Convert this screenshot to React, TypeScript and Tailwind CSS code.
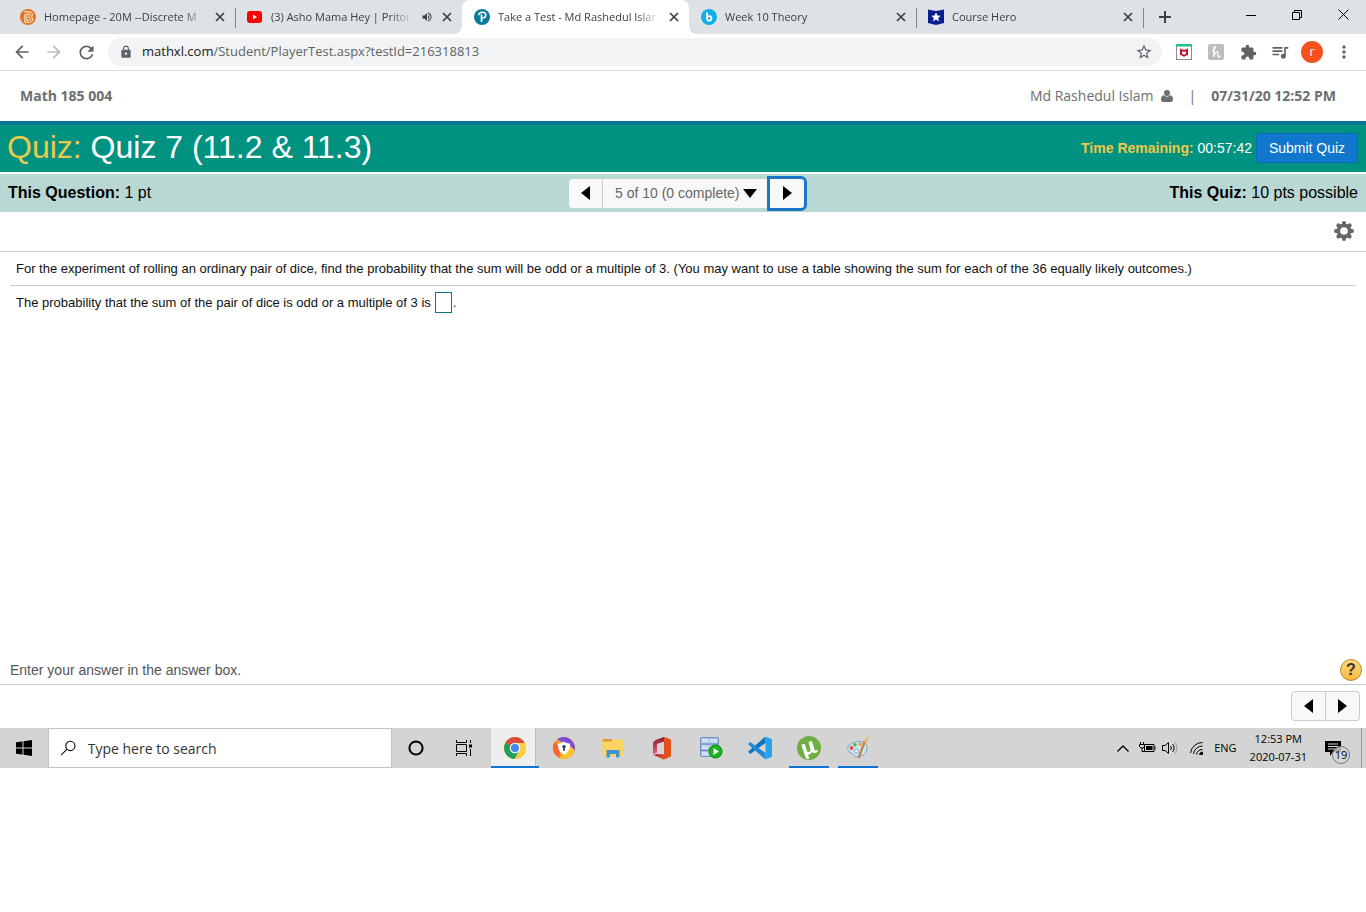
import { useState } from "react";
import type { ReactNode } from "react";
import {
  MdArrowBack,
  MdArrowForward,
  MdExtension,
  MdLock,
  MdMoreVert,
  MdQueueMusic,
  MdRefresh,
  MdStarBorder,
  MdVolumeUp,
} from "react-icons/md";

/* ---------- favicons ---------- */

const BrightspaceIcon = () => (
  <svg viewBox="0 0 16 16" className="w-4 h-4 shrink-0">
    <circle cx="8" cy="8" r="8" fill="#e5761d" />
    <path d="M3.8 2.8h5.7c3.3 0 3.6 3.8 1.9 5 2.4 1.2 1.7 5.5-1.9 5.5H4.8V5" fill="none" stroke="#fff" strokeWidth="0.9" />
    <path d="M6.7 11.4V4.8h2.5c1.7 0 1.7 2.2 0 2.2h-.9m0 1.6h1.2c1.9 0 1.9 2.8 0 2.8H6.7" fill="none" stroke="#fff" strokeWidth="0.8" />
  </svg>
);

const YoutubeIcon = () => (
  <svg viewBox="0 0 16 16" className="w-4 h-4 shrink-0">
    <rect x="0" y="2" width="15" height="12" rx="3" fill="#f00" />
    <path d="M6 5.6v4.8L10 8z" fill="#fff" />
  </svg>
);

const PearsonIcon = () => (
  <svg viewBox="0 0 16 16" className="w-4 h-4 shrink-0">
    <circle cx="8" cy="8" r="8" fill="#0b7b9c" />
    <path d="M4.4 6.2C5 4 7 3.2 8.6 3.3c2.4.1 3.4 1.5 3.2 3.1-.2 1.7-1.8 2.6-3.7 2.6" fill="none" stroke="#fff" strokeWidth="1.6" />
    <path d="M7.5 5.2V13" stroke="#fff" strokeWidth="1.7" />
  </svg>
);

const BongoIcon = () => (
  <svg viewBox="0 0 16 16" className="w-4 h-4 shrink-0">
    <circle cx="8" cy="8" r="8" fill="#10aeea" />
    <path d="M6 3.5v6.3" stroke="#fff" strokeWidth="1.9" />
    <circle cx="8.2" cy="9.4" r="2.2" fill="none" stroke="#fff" strokeWidth="1.8" />
  </svg>
);

const CourseHeroIcon = () => (
  <svg viewBox="0 0 16 16" className="w-4 h-4 shrink-0">
    <path d="M0 .5 8 2l8-1.5V14l-8 2-8-2z" fill="#0a1f8f" />
    <path d="m8 3.3 1.4 3.2 3.4.3-2.6 2.2.8 3.4-3-1.8-3 1.8.8-3.4-2.6-2.2 3.4-.3z" fill="#fff" />
  </svg>
);

const TABS = [
  { title: "Homepage - 20M --Discrete M", icon: <BrightspaceIcon />, active: false, audio: false },
  { title: "(3) Asho Mama Hey | Pritor", icon: <YoutubeIcon />, active: false, audio: true },
  { title: "Take a Test - Md Rashedul Islar", icon: <PearsonIcon />, active: true, audio: false },
  { title: "Week 10 Theory", icon: <BongoIcon />, active: false, audio: false },
  { title: "Course Hero", icon: <CourseHeroIcon />, active: false, audio: false },
];

/* ---------- browser chrome ---------- */

function TabStrip() {
  return (
    <div className="flex h-[34px] bg-[#dee1e6] pl-2 text-[#3c4043]">
      {TABS.map((t, i) => (
        <div
          key={t.title}
          className={`relative flex w-[227px] min-w-0 items-center pl-3 pr-[7px] ${t.active ? "rounded-t-lg bg-white" : ""}`}
        >
          {t.icon}
          <span className="ml-2 min-w-0 flex-1 overflow-hidden whitespace-nowrap text-[11px] [mask-image:linear-gradient(to_right,#000_calc(100%-24px),transparent)]">
            {t.title}
          </span>
          {t.audio && <MdVolumeUp size={12} className="ml-2 shrink-0" />}
          <button aria-label="Close tab" className="ml-1.5 flex w-4 shrink-0 justify-center">
            <svg width="10" height="10" stroke="currentColor" strokeWidth="1.7"><path d="m1 1 8 8m0-8-8 8" /></svg>
          </button>
          {!t.active && i !== 1 && <span className="absolute -right-px top-2 h-5 w-px bg-[#85888c]" />}
          {t.active && (
            <>
              <svg viewBox="0 0 8 8" className="absolute -left-2 bottom-0 h-2 w-2"><path d="M8 0v8H0a8 8 0 0 0 8-8" fill="#fff" /></svg>
              <svg viewBox="0 0 8 8" className="absolute -right-2 bottom-0 h-2 w-2"><path d="M0 0v8h8a8 8 0 0 1-8-8" fill="#fff" /></svg>
            </>
          )}
        </div>
      ))}
      <button aria-label="New tab" className="flex w-11 items-center justify-center">
        <svg width="12" height="12" stroke="currentColor" strokeWidth="2"><path d="M0 6h12M6 0v12" /></svg>
      </button>
      <div className="ml-auto flex h-[29px] text-black">
        <button aria-label="Minimize" className="flex w-[46px] items-center justify-center">
          <svg width="10" height="10"><path d="M0 5.5h10" stroke="currentColor" /></svg>
        </button>
        <button aria-label="Restore" className="flex w-[46px] items-center justify-center">
          <svg width="10" height="10" fill="none" stroke="currentColor"><path d="M.5 2.5h7v7h-7zM2.5 2.5v-2h7v7h-2" /></svg>
        </button>
        <button aria-label="Close" className="flex w-[46px] items-center justify-center">
          <svg width="11" height="11"><path d="m.5.5 10 10m0-10-10 10" stroke="currentColor" /></svg>
        </button>
      </div>
    </div>
  );
}

function Toolbar() {
  return (
    <div className="flex h-[37px] items-center border-b border-[#dadce0] px-1.5 text-[#5f6368]">
      <button aria-label="Back" className="flex w-8 justify-center"><MdArrowBack size={20} /></button>
      <button aria-label="Forward" className="flex w-8 justify-center text-[#b9bbbe]"><MdArrowForward size={20} /></button>
      <button aria-label="Reload" className="flex w-8 justify-center"><MdRefresh size={21} /></button>
      <div className="mx-1.5 flex h-7 flex-1 items-center rounded-full bg-[#f1f3f4] pl-[11px] pr-[9px]">
        <MdLock size={14} />
        <span className="ml-[9px] flex-1 whitespace-nowrap text-[13px]">
          <span className="text-[#202124]">mathxl.com</span>/Student/PlayerTest.aspx?testId=216318813
        </span>
        <button aria-label="Bookmark this page"><MdStarBorder size={18} /></button>
      </div>
      <button aria-label="McAfee WebAdvisor" className="flex w-8 justify-center">
        <svg width="16" height="16" viewBox="0 0 16 16">
          <rect x=".5" y=".5" width="15" height="15" fill="#fff" stroke="#85898d" />
          <path d="M0 0h16v2.5H0z" fill="#1dc37a" />
          <path d="M4 4.5 8 6l4-1.5v6.300L8 12.800l-4-2z" fill="#c8102e" />
          <path d="m6 7.2 2 .8 2-.8v2.500l-2 1-2-1z" fill="#fff" />
        </svg>
      </button>
      <button aria-label="Honey" className="flex w-8 justify-center">
        <svg width="16" height="16" viewBox="0 0 16 16">
          <rect width="16" height="16" rx="2" fill="#bdbdbd" />
          <path d="M4 7c2-.5 4-4 3-4.500C5.500 2 5.800 8 5.800 13c.5-3 1.700-5.200 3.200-5.200 1.700 0 .2 4.700 1.300 5.200.8.3 1.700-.5 2-1.500" fill="none" stroke="#fff" strokeWidth="1.2" />
        </svg>
      </button>
      <button aria-label="Extensions" className="flex w-8 justify-center"><MdExtension size={17} /></button>
      <button aria-label="Media controls" className="flex w-8 justify-center"><MdQueueMusic size={20} /></button>
      <button aria-label="Profile" className="mx-[5px] flex h-[22px] w-[22px] items-center justify-center rounded-full bg-[#f4511e] text-xs text-white">r</button>
      <button aria-label="Menu" className="flex w-8 justify-center"><MdMoreVert size={20} /></button>
    </div>
  );
}

/* ---------- quiz player ---------- */

const ArrowLeft = () => <svg width="9" height="14" viewBox="0 0 9 14"><path d="M9 0v14L0 7z" /></svg>;
const ArrowRight = () => <svg width="9" height="14" viewBox="0 0 9 14"><path d="M0 0v14l9-7z" /></svg>;

const TEETH = [0, 45, 90, 135, 180, 225, 270, 315];

const Gear = () => (
  <svg width="20" height="20" viewBox="-10 -10 20 20" fill="#666">
    <circle r="5.6" fill="none" stroke="#666" strokeWidth="3.6" />
    {TEETH.map((a) => (
      <path key={a} d="M-2.2-6.5-1.5-9.8h3l.7 3.300z" transform={`rotate(${a})`} />
    ))}
  </svg>
);

function CourseHeader() {
  return (
    <header className="flex h-[50px] items-center justify-between pl-5 pr-[30px] text-sm text-[#6a7070]">
      <span className="font-bold">Math 185 004</span>
      <div className="flex items-center">
        <span>Md Rashedul Islam</span>
        <svg width="12" height="12" viewBox="0 0 12 12" className="ml-2" fill="currentColor">
          <circle cx="6" cy="3" r="3" />
          <path d="M3 5.300C1 5.300 0 7 0 9.500 0 11 .8 12 2 12h8c1.200 0 2-1 2-2.500 0-2.500-1-4.200-3-4.200a4 4 0 0 1-6 0" />
        </svg>
        <span className="mx-[15px]">|</span>
        <span className="font-bold">07/31/20 12:52 PM</span>
      </div>
    </header>
  );
}

function QuizBars() {
  const [question, setQuestion] = useState("5");
  return (
    <>
      <div className="flex h-[51px] items-center justify-between border-t-4 border-[#0b7590] bg-[#009280] pb-0.5 pl-[7px] pr-2 text-white">
        <h1 className="pb-0.5 text-[32px] leading-10"><span className="text-[#ecc94b]">Quiz:</span> Quiz 7 (11.2 &amp; 11.3)</h1>
        <div className="flex items-center text-sm">
          <span><b className="text-[#ecc94b]">Time Remaining:</b> 00:57:42</span>
          <button className="ml-1 h-[30px] w-[102px] rounded-[3px] border border-[#0b69b8] bg-[#1177cc]">Submit Quiz</button>
        </div>
      </div>
      <div className="mt-0.5 grid h-[38px] grid-cols-[1fr_auto_1fr] items-center bg-[#bad8d3] px-2 text-base text-black">
        <p><b>This Question:</b> 1 pt</p>
        <div className="ml-2.5 flex items-center text-sm text-[#666]">
          <button aria-label="Previous question" className="flex h-[29px] w-[34px] items-center justify-center rounded-l-sm border-r border-[#ccc] bg-[#f8f8f8]"><ArrowLeft /></button>
          <label className="relative flex items-center">
            <select
              aria-label="Question"
              value={question}
              onChange={(e) => setQuestion(e.target.value)}
              className="h-[29px] w-[164px] appearance-none bg-[#f8f8f8] pl-3"
            >
              <option value="5">5 of 10 (0 complete)</option>
            </select>
            <svg width="14" height="9" viewBox="0 0 14 9" className="pointer-events-none absolute right-2.5"><path d="M0 0h14L7 9z" /></svg>
          </label>
          <button aria-label="Next question" className="flex h-[35px] w-10 items-center justify-center rounded-r-md border-3 border-[#1b77c5] bg-[#f8f8f8]"><ArrowRight /></button>
        </div>
        <p className="text-right"><b>This Quiz:</b> 10 pts possible</p>
      </div>
    </>
  );
}

function Question() {
  const [answer, setAnswer] = useState("");
  return (
    <main>
      <div className="flex h-10 items-center justify-end border-b border-[#c8c9cf] pb-0.5 pr-3">
        <button aria-label="Settings"><Gear /></button>
      </div>
      <div className="min-h-[404px] px-2.5 text-[13px] text-[#111]">
        <p className="border-b border-[#c8c9cf] px-1.5 pt-px leading-8">
          For the experiment of rolling an ordinary pair of dice, find the probability that the sum will be odd or a multiple of 3. (You may want to use a table showing the sum for each of the 36 equally likely outcomes.)
        </p>
        <p className="flex items-center px-1.5 leading-[33px]">
          <label htmlFor="answer">The probability that the sum of the pair of dice is odd or a multiple of 3 is</label>
          <input id="answer" value={answer} onChange={(e) => setAnswer(e.target.value)} className="ml-1 mr-px h-[21px] w-[17px] border border-[#0b7590]" />.
        </p>
      </div>
      <div className="flex h-[29px] items-center justify-between border-b border-[#c8c9cf] pl-2.5 pr-1 text-sm text-[#555]">
        <p>Enter your answer in the answer box.</p>
        <button aria-label="Help" className="flex h-[22px] w-[22px] items-center justify-center rounded-full border border-[#b98a2c] bg-linear-to-b from-[#ffd978] to-[#f5b83d] text-base font-bold text-[#333]">?</button>
      </div>
      <div className="flex h-[43px] items-center justify-end pb-0.5 pr-1.5">
        <button aria-label="Previous" className="flex h-[30px] w-[35px] items-center justify-center rounded-l-sm border border-[#ccc] bg-[#f8f8f8]"><ArrowLeft /></button>
        <button aria-label="Next" className="flex h-[30px] w-[34px] items-center justify-center rounded-r-sm border border-l-0 border-[#ccc] bg-[#f8f8f8]"><ArrowRight /></button>
      </div>
    </main>
  );
}

/* ---------- taskbar ---------- */

const ChromeIcon = () => (
  <svg width="24" height="24" viewBox="0 0 24 24">
    <circle cx="12" cy="12" r="11" fill="#fbc72c" />
    <path d="M12 12 2.5 6.5a11 11 0 0 1 19 0z" fill="#dd4b3e" />
    <path d="M12 12 2.5 6.5a11 11 0 0 0 9 16.5l5-8.5z" fill="#1fa15d" />
    <path d="M12 7h9.800a11 11 0 0 1-10.300 16l5-8.500z" fill="#fdce3f" />
    <circle cx="12" cy="12" r="5.3" fill="#fff" />
    <circle cx="12" cy="12" r="4.2" fill="#4a88ee" />
  </svg>
);

const SecureBrowserIcon = () => (
  <svg width="24" height="24" viewBox="0 0 24 24">
    <circle cx="12" cy="12" r="11" fill="#fb9a2a" />
    <path d="M5 3.5A11 11 0 0 1 22.5 15L17 9z" fill="#7a4be0" />
    <path d="M3 5.5a11 11 0 0 0 4 16.300L9 14 5 8z" fill="#f36a2e" />
    <path d="M7 21.800A11 11 0 0 0 22.600 14L18 10l-4 8z" fill="#ffc32c" />
    <path d="M12 5.5c2 1.500 4 2 6.200 2 0 5.500-2 9-6.200 11.500-4.200-2.500-6.200-6-6.200-11.500 2.200 0 4.200-.5 6.200-2" fill="#fff" />
    <circle cx="12" cy="10.8" r="1.7" fill="#2b3c5c" />
    <path d="M11.200 11h1.600v4h-1.600z" fill="#2b3c5c" />
  </svg>
);

const FolderIcon = () => (
  <svg width="24" height="24" viewBox="0 0 24 24">
    <path d="M1.500 3H11v4H1.500z" fill="#d9a123" />
    <path d="M1.500 5.500H11l1.500-2H22V20H1.500z" fill="#fcd462" />
    <path d="M5.500 21.500V14h13v7.500H15V18H9v3.500z" fill="#3d93d0" />
  </svg>
);

const OfficeIcon = () => (
  <svg width="24" height="24" viewBox="0 0 24 24">
    <defs>
      <linearGradient id="office" x1="0" y1="0" x2="0" y2="1">
        <stop offset="0" stopColor="#8f1d2c" />
        <stop offset="1" stopColor="#e8607c" />
      </linearGradient>
    </defs>
    <path d="M14 1 5.500 4 3 6.500v12l4-2V8l7-2.500z" fill="url(#office)" />
    <path d="M3.500 19 7 18l7 .5v5z" fill="#c2263c" />
    <path d="m14 1 7 2.500v17l-7 3-6.500-3.500 6.500-.5v-14z" fill="#e4501b" />
  </svg>
);

const SqlIcon = () => (
  <svg width="24" height="24" viewBox="0 0 24 24">
    <rect x="1.5" y="1.5" width="18" height="19" rx="1" fill="#a9c3e6" stroke="#6f8fbd" />
    <path d="M1.500 8h18m-18 6.500h18" stroke="#5f84b8" />
    <path d="M3 3h6.500v3.500H3zm0 6.500h6.500V13H3zM3 16h6.500v3.500H3zM11 3h7v3.500h-7zm0 6.500h7V13h-7z" fill="#cfe0f5" />
    <circle cx="16.5" cy="15.5" r="6.5" fill="#19b51c" stroke="#0d860f" />
    <path d="M14.500 12v7l5.500-3.500z" fill="#fff" />
  </svg>
);

const VsCodeIcon = () => (
  <svg width="24" height="24" viewBox="0 0 24 24">
    <path d="M0 15.800 17.500.5V7L2.200 18z" fill="#1173ba" />
    <path d="m0 8.200 17.500 15.300V17L2.200 6z" fill="#2089d2" />
    <path d="M17.500.5 24 3.200v17.600l-6.500 2.700z" fill="#2ba3ea" />
  </svg>
);

const TorrentIcon = () => (
  <svg width="24" height="24" viewBox="0 0 24 24">
    <circle cx="12" cy="12" r="12" fill="#6fae43" />
    <path d="M4.300 8.500 7.800 8l2.400 7.500c1.300 1.200 3.800.3 3.300-2L11.500 5.800l3.500-.6 2.400 8.300c.4 1.300 1.600 1.300 3 .6l.4 1.600c-2.300 1.700-4.800 1.700-6 .2-.8 1.900-2.200 2.700-3.800 2.600l1.300 4.500-3.400-.6z" fill="#fff" />
  </svg>
);

const PaintIcon = () => (
  <svg width="24" height="24" viewBox="0 0 24 24">
    <path d="M9 6c6-2 13 1 12 7-1 6-6 8-11 8-2 0-2-3-5-4-5-2-5-8 4-11" fill="#cde3f1" stroke="#7ba7c4" />
    <circle cx="5.5" cy="12" r="1.9" fill="#e0523e" />
    <circle cx="9" cy="8.8" r="1.8" fill="#58b04b" />
    <circle cx="14" cy="8.3" r="1.7" fill="#f0a332" />
    <circle cx="10.5" cy="15" r="2" fill="#fff" stroke="#7ba7c4" />
    <path d="m12.500 22 6.500-17" stroke="#bd7f45" strokeWidth="2.2" />
    <path d="M17.500 5.500 21 .5l2 1L21 7z" fill="#e8b878" />
  </svg>
);

const APPS: { name: string; icon: ReactNode; running?: boolean }[] = [
  { name: "Secure Browser", icon: <SecureBrowserIcon /> },
  { name: "File Explorer", icon: <FolderIcon /> },
  { name: "Office", icon: <OfficeIcon /> },
  { name: "SQL Server", icon: <SqlIcon /> },
  { name: "Visual Studio Code", icon: <VsCodeIcon /> },
  { name: "uTorrent", icon: <TorrentIcon />, running: true },
  { name: "Paint", icon: <PaintIcon />, running: true },
];

function Taskbar() {
  return (
    <footer className="flex h-10 bg-[#d4d4d4] text-black">
      <button aria-label="Start" className="flex w-12 items-center justify-center">
        <svg width="16" height="16" viewBox="0 0 16 16"><path d="M0 2.300 6.500 1.400v6.100H0zM7.500 1.200 16 0v7.500H7.500zM0 8.500h6.500v6.100L0 13.700zm7.500 0H16V16l-8.500-1.200z" /></svg>
      </button>
      <label className="flex w-[344px] items-center border border-[#c3c3c3] bg-white pl-3">
        <svg width="16" height="16" viewBox="0 0 16 16" fill="none" stroke="#000" strokeWidth="1.2"><circle cx="10.2" cy="5.7" r="5" /><path d="M6.500 9.300 0 15.800" /></svg>
        <input aria-label="Search" placeholder="Type here to search" className="ml-3 w-full bg-transparent pt-0.5 text-sm outline-none placeholder:text-[#333]" />
      </label>
      <button aria-label="Cortana" className="flex w-12 items-center justify-center">
        <svg width="16" height="16"><circle cx="8" cy="8" r="6.6" fill="none" stroke="#000" strokeWidth="2" /></svg>
      </button>
      <button aria-label="Task view" className="flex w-12 items-center justify-center">
        <svg width="16" height="16" fill="none" stroke="#000"><path d="M.5 0v2.500h10V0M.5 16v-2.500h10V16M.5 4.500h10v7H.5zM14.500 0v3m0 6v7" /><path d="M13 4.500h3v3h-3z" fill="#000" stroke="none" /></svg>
      </button>
      <button aria-label="Google Chrome" className="ml-[3px] flex w-12 border-b-2 border-[#0f74d1] pr-[3px]">
        <span className="flex h-full w-full items-center justify-center border-r border-[#bbb] bg-[#eee] pl-1 pt-0.5"><ChromeIcon /></span>
      </button>
      {APPS.map((a) => (
        <button key={a.name} aria-label={a.name} className="flex w-[49px] justify-center">
          <span className={`flex h-full w-10 items-center justify-center border-b-2 pt-0.5 ${a.running ? "border-[#0f74d1]" : "border-transparent"}`}>{a.icon}</span>
        </button>
      ))}
      <div className="ml-auto flex items-center text-[11px]">
        <button aria-label="Show hidden icons">
          <svg width="12" height="7" fill="none" stroke="#000" strokeWidth="1.3"><path d="M.5 6.500 6 1l5.500 5.500" /></svg>
        </button>
        <svg width="17" height="12" viewBox="0 0 17 12" className="ml-2.5">
          <path d="M5.500 2.500H15v7H5.500z" fill="none" stroke="#000" />
          <path d="M7 4h6.500v4H7zM15.500 4.500h1v3h-1z" />
          <path d="M1.500 0v2m3-2v2M.5 2.500h5v2L4 6H2L.5 4.500zM3 6v3.500h2" fill="none" stroke="#000" />
        </svg>
        <svg width="17" height="14" viewBox="0 0 17 14" className="ml-1.5" fill="none" stroke="#000">
          <path d="M.5 4.500H3l3.500-3v11L3 9.500H.5zM8.500 5c1 1 1 3 0 4m2-6c2 2 2 6 0 8" />
          <path d="M12.500 1c3 3 3 9 0 12" stroke="#999" />
        </svg>
        <svg width="14" height="14" viewBox="0 0 14 14" className="ml-[11px]" fill="none" stroke="#000">
          <path d="M.5 12A12 12 0 0 1 12.500 1.500M3.500 13A9 9 0 0 1 12.500 5m-6 8.500a6 6 0 0 1 6-5" />
          <path d="M9.500 13.500a3 3 0 0 1 3-2.500v2.500z" fill="#000" />
        </svg>
        <span className="ml-2.5">ENG</span>
        <div className="ml-[13px] text-center leading-[18px]">
          <div>12:53 PM</div>
          <div>2020-07-31</div>
        </div>
        <button aria-label="Notifications" className="relative ml-[17px] flex h-10 w-7 items-center">
          <svg width="18" height="18" viewBox="0 0 18 18">
            <path d="M1 2h16v11H9l-3 4v-4H1z" />
            <path d="M4 5h10M4 7.500h10M4 10h7" stroke="#d4d4d4" />
          </svg>
          <span className="absolute bottom-1 right-0.5 flex h-[18px] w-[18px] items-center justify-center rounded-full border border-[#777] bg-[#d4d4d4]/80">19</span>
        </button>
        <span className="ml-[9px] h-10 w-[5px] border-l border-[#999]" />
      </div>
    </footer>
  );
}

export default function App() {
  return (
    <div className="min-h-screen bg-white font-['Open_Sans',sans-serif]">
      <TabStrip />
      <Toolbar />
      <CourseHeader />
      <div className="font-['Liberation_Sans',Arial,sans-serif]">
        <QuizBars />
        <Question />
      </div>
      <Taskbar />
    </div>
  );
}
